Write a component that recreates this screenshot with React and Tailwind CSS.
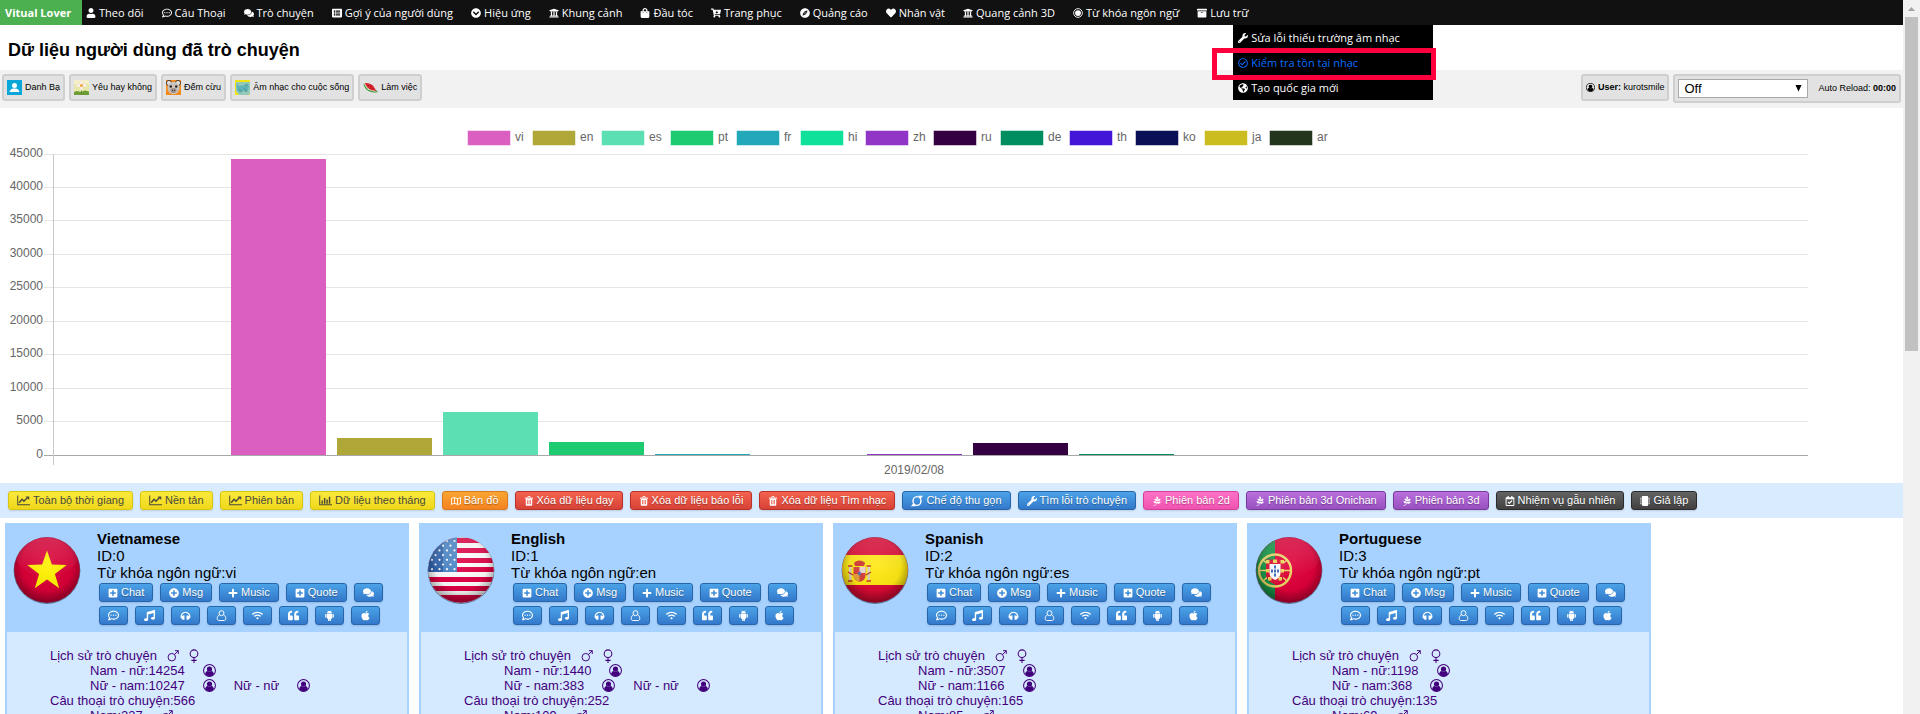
import React from "react";
import {
  FaUser, FaRegCommentDots, FaComments, FaListAlt, FaChevronCircleDown, FaUniversity, FaShoppingBag,
  FaCartArrowDown, FaCompass, FaHeart, FaArchive, FaWrench, FaRegCheckCircle, FaGlobeAmericas,
  FaRegMap, FaPagelines, FaRegCalendarCheck, FaMicrochip, FaPlusSquare,
  FaPlusCircle, FaPlus, FaMusic, FaWifi, FaQuoteLeft, FaApple,
} from "react-icons/fa";

/* ---------- hand-drawn icons ---------- */

const RingDot = (p) => (
  <svg viewBox="0 0 16 16" width="1em" height="1em" {...p}>
    <circle cx="8" cy="8" r="7" fill="none" stroke="currentColor" strokeWidth="1.4" />
    <circle cx="8" cy="8" r="4.6" fill="currentColor" />
  </svg>
);

const UserRing = (p) => (
  <svg viewBox="0 0 16 16" width="1em" height="1em" {...p}>
    <circle cx="8" cy="8" r="7.3" fill="none" stroke="currentColor" strokeWidth="1.3" />
    <circle cx="8" cy="6.2" r="3.2" fill="currentColor" />
    <path d="M2.6 12.2C3 9.8 4.3 8.7 5.6 8.6c1.4 1.2 3.4 1.2 4.8 0 1.3.1 2.6 1.2 3 3.6A7 7 0 0 1 8 15a7 7 0 0 1-5.4-2.8z" fill="currentColor" />
  </svg>
);

const LineChart = (p) => (
  <svg viewBox="0 0 18 14" width="13" height="11" {...p}>
    <path d="M1 0v13h17" fill="none" stroke="currentColor" strokeWidth="1.4" />
    <path d="M3 10l4-4.6 2.6 2.6L14.6 3" fill="none" stroke="currentColor" strokeWidth="2" />
    <path d="M11.8 1.4H17v5z" fill="currentColor" />
  </svg>
);

const BarChart = (p) => (
  <svg viewBox="0 0 18 14" width="13" height="11" {...p}>
    <path d="M1 0v13h17" fill="none" stroke="currentColor" strokeWidth="1.4" />
    <path d="M3.4 7h2v4.6h-2zM6.8 3.5h2v8.1h-2zM10.2 5.5h2v6.1h-2zM13.6 1.8h2v9.8h-2z" fill="currentColor" />
  </svg>
);

const Trash = (p) => (
  <svg viewBox="0 0 16 16" width="1em" height="1em" {...p}>
    <path d="M5.500 2.600L6.300.9h3.400l.8 1.700" fill="none" stroke="currentColor" strokeWidth="1.400" />
    <path d="M1.500 2.600h13v1.700h-13z" fill="currentColor" />
    <path fillRule="evenodd" d="M2.800 4.300h10.400V14c0 1-.6 1.600-1.400 1.600H4.200c-.8 0-1.400-.6-1.400-1.600zM5 6.500v6.800h1.100V6.500zM7.450 6.500v6.800h1.100V6.500zM9.900 6.500v6.800H11V6.500z" fill="currentColor" />
  </svg>
);

const Compact = (p) => (
  <svg viewBox="0 0 16 16" width="12" height="12" {...p}>
    <ellipse cx="8" cy="8" rx="5.300" ry="5.800" fill="none" stroke="currentColor" strokeWidth="1.900" />
    <path d="M9.500 1H16l-3 4zM6.500 15H0l3-4z" fill="currentColor" />
  </svg>
);

const Headset = (p) => (
  <svg viewBox="0 0 16 16" width="1em" height="1em" {...p}>
    <path d="M2 11.500A6.300 6.300 0 1 1 14 11.500" fill="none" stroke="currentColor" strokeWidth="1.800" />
    <path d="M4.700 8h1.800v6H4.700c-1.700 0-3-1.300-3-3s1.300-3 3-3zM11.300 8H9.500v6h1.800c1.700 0 3-1.300 3-3s-1.300-3-3-3z" fill="currentColor" />
  </svg>
);

const Person = (p) => (
  <svg viewBox="0 0 16 16" width="1em" height="1em" fill="none" stroke="currentColor" strokeWidth="1.400" {...p}>
    <circle cx="8" cy="4.600" r="3.600" />
    <path d="M5 7c-2 .7-3.200 3-3.200 5.500 0 1.800 1 2.800 2.400 2.800h7.600c1.400 0 2.400-1 2.400-2.800C14.200 10 13 7.700 11 7" />
  </svg>
);

const Robot = (p) => (
  <svg viewBox="0 0 16 16" width="1em" height="1em" fill="currentColor" {...p}>
    <path d="M4.200 5.200C4.300 3.600 5.200 2.600 6 2.100L5.200.6l.5-.3.8 1.500a4.600 4.600 0 0 1 3 0L10.300.3l.5.300L10 2.100c.8.500 1.700 1.500 1.800 3.100z" />
    <path d="M4.200 5.800h7.600v6c0 .6-.4 1-1 1H10v2.300a.9.9 0 0 1-1.800 0v-2.300h-.4v2.300a.9.9 0 0 1-1.800 0v-2.300h-.8c-.6 0-1-.4-1-1z" />
    <rect x="1.700" y="5.700" width="1.900" height="5.600" rx=".95" />
    <rect x="12.400" y="5.700" width="1.900" height="5.600" rx=".95" />
  </svg>
);

const Mars = (p) => (
  <svg viewBox="0 0 16 16" width="12" height="12" fill="none" stroke="currentColor" strokeWidth="1.300" {...p}>
    <circle cx="6.400" cy="9.600" r="5" />
    <path d="M10 6L15 1M10.600.9H15v4.400" />
  </svg>
);

const Venus = (p) => (
  <svg viewBox="3 0 10 16" width="10" height="14" fill="none" stroke="currentColor" strokeWidth="1.200" {...p}>
    <circle cx="8" cy="5.400" r="4.400" />
    <path d="M8 10v6M5 13h6" />
  </svg>
);

const Contact = () => (
  <svg viewBox="0 0 15 15" className="size-[15px]">
    <rect width="15" height="15" fill="#0aa7d8" />
    <circle cx="7.500" cy="5.600" r="2.500" fill="#fff" />
    <path d="M2.600 12c.4-2.400 2-3.300 3.600-3.500h2.600c1.600.2 3.200 1.100 3.600 3.500z" fill="#fff" />
  </svg>
);

const Flower = () => (
  <svg viewBox="0 0 15 15" className="size-[15px]">
    <rect width="15" height="15" fill="#e6e9a8" />
    <rect width="15" height="4" fill="#f3efcb" />
    <path d="M0 12l3-1 4 1 4-1.500 4 1V15H0z" fill="#6c9c33" />
    <path d="M7.500 8v6" stroke="#5d8a2c" />
    <g fill="#fdf3ee" stroke="#e9cdbb" strokeWidth=".3">
      <ellipse cx="7.500" cy="3" rx="1.500" ry="2.400" />
      <ellipse cx="7.500" cy="8" rx="1.500" ry="2.400" />
      <ellipse cx="4.700" cy="5.500" rx="2.400" ry="1.500" />
      <ellipse cx="10.300" cy="5.500" rx="2.400" ry="1.500" />
    </g>
    <circle cx="7.500" cy="5.400" r="1.500" fill="#f2a33a" />
  </svg>
);

const Sheep = () => (
  <svg viewBox="0 0 15 15" className="size-[15px]">
    <rect width="15" height="15" fill="#f58a1b" />
    <circle cx="3" cy="3" r="2.600" fill="#e9e4dc" stroke="#4b3d35" />
    <circle cx="12" cy="3" r="2.600" fill="#e9e4dc" stroke="#4b3d35" />
    <ellipse cx="7.500" cy="8" rx="6" ry="6.200" fill="#c9c2bd" />
    <ellipse cx="7.500" cy="10.500" rx="3" ry="2.400" fill="#9d908b" />
    <circle cx="4.800" cy="6.500" r="1.200" fill="#222" />
    <circle cx="10.200" cy="6.500" r="1.200" fill="#222" />
    <circle cx="6.500" cy="10.300" r=".6" fill="#3a2d2a" />
    <circle cx="8.500" cy="10.300" r=".6" fill="#3a2d2a" />
  </svg>
);

const Melody = () => (
  <svg viewBox="0 0 15 15" className="size-[15px]">
    <rect width="15" height="15" fill="#f2e512" />
    <path d="M1 2h14v12l-2 1H4L1 11z" fill="#93c9b6" />
    <path d="M1 3l3 3 6-1 3-2 1 4-2 5-4-1-3 2-3-3z" fill="#62b3b8" />
    <path d="M4 9l3 3M9 8l3 4M10 4l2 2" stroke="#4c8f8c" strokeWidth=".9" />
  </svg>
);

const Melon = () => (
  <svg viewBox="0 0 15 15" className="size-[15px]">
    <path d="M.5 3.500C1.200 9.500 7 13.500 14 12.200c.7-.2.700-.9.300-1.300z" fill="#3f9a3c" />
    <path d="M1.300 3.300C2.500 8.800 8 12.200 13.600 11.300z" fill="#f4f1d6" />
    <path d="M2 3C3.200 7.900 8 11.300 13.300 10.700L10 5.500C7.500 3.300 4.500 2.600 2 3z" fill="#d8252f" />
    <path d="M5 5.200l.5.700M7.500 6l.4.700M6.500 8l.5.500M9.500 8.500l.5.500" stroke="#3a0d12" strokeWidth=".7" />
  </svg>
);

/* ---------- flags ---------- */

function Flag({ id, children }) {
  return (
    <svg viewBox="0 0 68 68" className="size-[68px] shrink-0" role="img" aria-label={id}>
      <defs>
        <clipPath id={`clip-${id}`}><circle cx="34" cy="34" r="32.800" /></clipPath>
        <radialGradient id={`shade-${id}`} cx=".5" cy=".42" r=".6">
          <stop offset="0" stopColor="#fff" stopOpacity=".05" />
          <stop offset=".65" stopColor="#000" stopOpacity=".05" />
          <stop offset="1" stopColor="#000" stopOpacity=".45" />
        </radialGradient>
        <linearGradient id={`gloss-${id}`} x1="0" y1="0" x2="0" y2="1">
          <stop offset="0" stopColor="#fff" stopOpacity=".18" />
          <stop offset="1" stopColor="#fff" stopOpacity="0" />
        </linearGradient>
      </defs>
      <circle cx="34" cy="34.500" r="33.400" fill="#24364f" opacity=".6" />
      <g clipPath={`url(#clip-${id})`}>
        {children}
        <ellipse cx="34" cy="20" rx="31" ry="20" fill={`url(#gloss-${id})`} />
        <circle cx="34" cy="34" r="33" fill={`url(#shade-${id})`} />
      </g>
    </svg>
  );
}

const FlagVi = () => (
  <Flag id="Vietnamese">
    <rect width="68" height="68" fill="#db0038" />
    <path d="M34 14.500l4.900 14.100 14.900.3-11.900 9 4.300 14.300L34 43.600l-12.200 8.600 4.300-14.300-11.900-9 14.900-.3z" fill="#fff200" />
  </Flag>
);

const FlagEn = () => (
  <Flag id="English">
    <rect width="68" height="68" fill="#fff" />
    {[2, 12, 22, 31, 41, 50, 59].map((y, i) => <rect key={y} y={y} width="68" height={i === 6 ? 9 : 5} fill="#e00044" />)}
    <rect width="30" height="36" fill="#4a86c8" />
    <rect width="16" height="36" fill="#1f4f9b" opacity=".6" />
    {[0, 1, 2, 3, 4, 5, 6].map((r) =>
      [0, 1, 2, 3].map((c) => <circle key={`${r}-${c}`} cx={(r % 2 ? 1 : 5) + c * 7.500} cy={5 + r * 4.700} r="1.100" fill="#fff" />)
    )}
  </Flag>
);

const FlagEs = () => (
  <Flag id="Spanish">
    <rect width="68" height="68" fill="#dc0a35" />
    <rect y="19" width="68" height="30" fill="#ffe914" />
    <path d="M13 27c2-3.500 9-3.500 11 0l-1 3h-9z" fill="#d2342f" />
    <path d="M12.500 31h12v8c0 4-2.500 6-6 7-3.500-1-6-3-6-7z" fill="#d6423c" />
    <path d="M18.500 31h6v6h-6z" fill="#e9d6d0" />
    <path d="M12.500 38h6v8c-3.500-1-6-3-6-8z" fill="#e5a23a" />
    <ellipse cx="18.500" cy="37.500" rx="1.600" ry="2" fill="#5b6fb5" />
    <path d="M8 31h2.500v13H8zM26.500 31H29v13h-2.500z" fill="#d9d0c0" />
    <path d="M7 30h4.500M25.500 30H30M7 45h4.500M25.500 45H30M7 36l5 3M30 36l-5 3" stroke="#c0392b" strokeWidth="1.400" />
  </Flag>
);

const FlagPt = () => (
  <Flag id="Portuguese">
    <rect width="68" height="68" fill="#e0003a" />
    <rect width="20" height="68" fill="#17964a" />
    <g fill="none" stroke="#ecd566">
      <circle cx="20" cy="34.500" r="16" strokeWidth="2.400" />
      <path d="M8 24l24 21M8 45l24-21M5 34.500h30" strokeWidth="1.600" />
    </g>
    <path d="M11 23.500h18v14c0 6-4 9-9 11-5-2-9-5-9-11z" fill="#dc1238" />
    <path d="M11 24h3.500v3.500H11zM18 23.500h4V27h-4zM25.500 24H29v3.500h-3.500zM11 33h3.500v3.500H11zM25.500 33H29v3.500h-3.500zM13 41h3.500v3.500H13zM23.500 41H27v3.500h-3.500z" fill="#f0d95a" />
    <path d="M14.500 28h11v8.500c0 4-2 6-5.500 7.500-3.500-1.500-5.500-3.500-5.500-7.500z" fill="#fff" />
    <path d="M19 29.500h2v3h-2zM16 33.500h2v3h-2zM19 33.500h2v3h-2zM22 33.500h2v3h-2zM19 37.500h2v3h-2z" fill="#3d6ec0" />
  </Flag>
);

/* ---------- data ---------- */

const nav = [
  [FaUser, "Theo dõi"], [FaRegCommentDots, "Câu Thoại"], [FaComments, "Trò chuyện"],
  [FaListAlt, "Gợi ý của người dùng"], [FaChevronCircleDown, "Hiệu ứng"], [FaUniversity, "Khung cảnh"],
  [FaShoppingBag, "Đầu tóc"], [FaCartArrowDown, "Trang phục"], [FaCompass, "Quảng cáo"],
  [FaHeart, "Nhân vật"], [FaUniversity, "Quang cảnh 3D"], [RingDot, "Từ khóa ngôn ngữ"], [FaArchive, "Lưu trữ"],
];

const menu = [
  [FaWrench, "Sửa lỗi thiếu trường âm nhạc", "text-white"],
  [FaRegCheckCircle, "Kiểm tra tồn tại nhạc", "text-[#0a6dff]"],
  [FaGlobeAmericas, "Tạo quốc gia mới", "text-white"],
];

const apps = [
  [Contact, "Danh Bạ"], [Flower, "Yêu hay không"], [Sheep, "Đếm cừu"], [Melody, "Âm nhạc cho cuộc sống"], [Melon, "Làm việc"],
];

const series = [
  ["vi", "#da5fc1", 44300, 467], ["en", "#afa839", 2550, 532], ["es", "#5ce0b3", 6450, 601], ["pt", "#1ecb71", 1950, 670],
  ["fr", "#22a8b8", 150, 736], ["hi", "#0fe09a", 0, 800], ["zh", "#9035c5", 150, 865], ["ru", "#350042", 1800, 933],
  ["de", "#008e60", 150, 1000], ["th", "#4316d8", 0, 1069], ["ko", "#0b0f55", 0, 1135], ["ja", "#cbbc1f", 0, 1204], ["ar", "#24351d", 0, 1269],
];

const tones = {
  yellow: "border-[#d9c60f] from-[#fbea3c] to-[#efd717] text-[#4a4a3a]",
  orange: "border-[#d8791c] from-[#f9a532] to-[#f4831f] text-white [text-shadow:0_1px_1px_#0005]",
  red: "border-[#b8322a] from-[#f5624f] to-[#d64236] text-white [text-shadow:0_1px_1px_#0005]",
  blue: "border-[#2766ab] from-[#4ba3e7] to-[#3478cb] text-white [text-shadow:0_1px_1px_#0005]",
  pink: "border-[#d53f9c] from-[#fd72c6] to-[#f052b0] text-white [text-shadow:0_1px_1px_#0005]",
  purple: "border-[#783b9c] from-[#ba70dd] to-[#9850c0] text-white [text-shadow:0_1px_1px_#0005]",
  dark: "border-[#2b2b2b] from-[#636363] to-[#414141] text-white [text-shadow:0_1px_1px_#0005]",
};

const actions = [
  [LineChart, "Toàn bộ thời giang", "yellow"], [LineChart, "Nền tản", "yellow"], [LineChart, "Phiên bản", "yellow"],
  [BarChart, "Dữ liệu theo tháng", "yellow"], [FaRegMap, "Bản đồ", "orange"], [Trash, "Xóa dữ liệu dạy", "red"],
  [Trash, "Xóa dữ liệu báo lỗi", "red"], [Trash, "Xóa dữ liệu Tìm nhạc", "red"], [Compact, "Chế độ thu gọn", "blue"],
  [FaWrench, "Tìm lỗi trò chuyện", "blue"], [FaPagelines, "Phiên bản 2d", "pink"], [FaPagelines, "Phiên bản 3d Onichan", "purple"],
  [FaPagelines, "Phiên bản 3d", "purple"], [FaRegCalendarCheck, "Nhiệm vụ gẫu nhiên", "dark"], [FaMicrochip, "Giả lập", "dark"],
];

const countries = [
  { Pic: FlagVi, name: "Vietnamese", key: "vi", mf: 14254, fm: 10247, ff: true, talk: 566, male: 237 },
  { Pic: FlagEn, name: "English", key: "en", mf: 1440, fm: 383, ff: true, talk: 252, male: 109 },
  { Pic: FlagEs, name: "Spanish", key: "es", mf: 3507, fm: 1166, ff: false, talk: 165, male: 85 },
  { Pic: FlagPt, name: "Portuguese", key: "pt", mf: 1198, fm: 368, ff: false, talk: 135, male: 69 },
];

const rowOne = [[FaPlusSquare, "Chat"], [FaPlusCircle, "Msg"], [FaPlus, "Music"], [FaPlusSquare, "Quote"], [FaComments, ""]];
const rowTwo = [
  [FaRegCommentDots, "Comments"], [FaMusic, "Songs"], [Headset, "Audio"], [Person, "Users"],
  [FaWifi, "Radio"], [FaQuoteLeft, "Quotes"], [Robot, "Android"], [FaApple, "Apple"],
];

/* ---------- parts ---------- */

function Pill({ Icon, label, tone, name }) {
  return (
    <button
      type="button"
      aria-label={name || label}
      className={`flex h-[19px] items-center gap-[3px] rounded-[3px] border bg-linear-to-b px-2 text-[11px] leading-none whitespace-nowrap shadow-[0_1px_2px_#0002] ${tones[tone]}`}
    >
      <Icon className={`shrink-0 ${label ? "text-[10px]" : "text-[11px]"}`} />
      {label}
    </button>
  );
}

function NavBar() {
  return (
    <nav className="flex h-[25px] bg-[#111] font-['Open_Sans','Noto_Sans',sans-serif] text-[11px] text-white">
      <a href="#home" className="flex w-[82px] items-center bg-[#4caf50] pt-px pl-[5px] font-bold">Vitual Lover</a>
      <ul className="flex gap-[18px] pl-1">
        {nav.map(([Icon, label], i) => (
          <li key={label} className="relative flex">
            <a href={`#nav-${i}`} className="flex items-center gap-[3px] pt-px whitespace-nowrap"><Icon className="text-[10px]" />{label}</a>
            {i === nav.length - 1 && (
              <div className="absolute top-full left-9 z-10 w-[200px] bg-black">
                {menu.map(([MIcon, text, tone]) => (
                  <a key={text} href="#menu" className={`flex h-[25px] items-center gap-[3px] pt-px pl-[5px] whitespace-nowrap ${tone}`}><MIcon className="text-[10px]" />{text}</a>
                ))}
                <div className="pointer-events-none absolute top-[23px] -left-[21px] h-8 w-[224px] border-[5px] border-[#ff003c]" />
              </div>
            )}
          </li>
        ))}
      </ul>
    </nav>
  );
}

function ToolBar() {
  const box = "flex items-center rounded-[3px] border-2 border-[#cfcfcf] bg-[#e2e2e2]";
  return (
    <div className="flex h-[38px] items-start justify-between bg-[#f2f2f2] px-[2px] pt-1 text-[9px] text-black">
      <div className="flex gap-1">
        {apps.map(([Icon, label]) => (
          <a key={label} href="#app" className={`${box} h-[27px] gap-[3px] px-[3px] whitespace-nowrap`}><Icon />{label}</a>
        ))}
      </div>
      <div className="flex items-start gap-1">
        <a href="#user" className={`${box} h-[27px] gap-[3px] px-[3px] whitespace-nowrap`}>
          <UserRing className="text-[9px]" /><span><b>User:</b> kurotsmile</span>
        </a>
        <div className={`${box} h-[29px] gap-[10px] px-[3px]`}>
          <div className="relative">
            <select aria-label="Auto reload interval" className="h-[19px] w-[130px] appearance-none border border-[#a9a9a9] bg-white pl-[5px] text-[13px] leading-none">
              <option>Off</option>
              <option>On</option>
            </select>
            <svg viewBox="0 0 8 8" className="pointer-events-none absolute top-[6px] right-[6px] size-[7px]"><path d="M.5 0h7L4 7.500z" /></svg>
          </div>
          <span className="whitespace-nowrap">Auto Reload: <b>00:00</b></span>
        </div>
      </div>
    </div>
  );
}

function Chart() {
  const zero = 347.5;
  const y = (v) => zero - (v / 45000) * 301;
  return (
    <svg viewBox="0 0 1903 375" className="block h-auto w-full" fontSize="12" fill="#666" role="img" aria-label="2019/02/08">
      {series.map(([key, color, , x]) => (
        <g key={key}>
          <rect x={x + 0.5} y="22.500" width="43" height="15" fill={color} stroke="#fff" strokeOpacity=".5" />
          <text x={x + 48} y="33">{key}</text>
        </g>
      ))}
      {[0, 5000, 10000, 15000, 20000, 25000, 30000, 35000, 40000, 45000].map((v) => (
        <g key={v}>
          <path d={`M44 ${Math.round(y(v)) - 0.5}H1808`} stroke={v ? "#e5e5e5" : "#a8a8a8"} />
          <text x="43" y={Math.round(y(v)) + 2} textAnchor="end">{v}</text>
        </g>
      ))}
      <path d="M53.500 46V357" stroke="#c9c9c9" />
      {series.map(([key, color, v], i) => v > 0 && (
        <rect key={key} x={231 + i * 106} y={Math.round(y(v))} width="95" height={347 - Math.round(y(v))} fill={color} />
      ))}
      <text x="914" y="366" textAnchor="middle">2019/02/08</text>
    </svg>
  );
}

function Country({ id, data }) {
  const { Pic } = data;
  const row = "flex items-center h-[15px]";
  return (
    <section className="w-[404px] border-2 border-t-0 border-[#a7d2ff] bg-[#d6eaff]">
      <header className="flex h-[109px] gap-4 bg-[#a7d2ff] pl-[6px]">
        <div className="pt-[13px]"><Pic /></div>
        <div className="pt-[7px] text-[15px] leading-[17px] text-black">
          <h2 className="font-bold">{data.name}</h2>
          <p>ID:{id}</p>
          <p>Từ khóa ngôn ngữ:{data.key}</p>
          <div className="mt-[2px] flex gap-[7px] pl-[2px]">
            {rowOne.map(([Icon, label]) => <Pill key={label} Icon={Icon} label={label} name={label || "Messages"} tone="blue" />)}
          </div>
          <div className="mt-1 flex gap-[7px] pl-[2px]">
            {rowTwo.map(([Icon, name]) => <Pill key={name} Icon={Icon} name={name} tone="blue" />)}
          </div>
        </div>
      </header>
      <ul className="h-64 pt-4 pl-[43px] text-[13px] leading-[15px] text-[#42007c]">
        <li>
          <div className={row}>Lịch sử trò chuyện<Mars className="ml-[10px]" /><Venus className="ml-[10px]" /></div>
          <ul className="pl-10">
            <li className={row}>Nam - nữ:{data.mf}<UserRing className="ml-[18px] text-[13px]" /></li>
            <li className={row}>
              Nữ - nam:{data.fm}<UserRing className="ml-[18px] text-[13px]" />
              {data.ff && <span className="ml-[18px] flex items-center">Nữ - nữ<UserRing className="ml-[18px] text-[13px]" /></span>}
            </li>
          </ul>
        </li>
        <li>
          <div className={row}>Câu thoại trò chuyện:{data.talk}</div>
          <ul className="pl-10">
            <li className={row}>Nam:{data.male}<Mars className="ml-[18px]" /></li>
          </ul>
        </li>
      </ul>
    </section>
  );
}

export default function App() {
  return (
    <div className="flex h-screen overflow-hidden bg-white font-['Liberation_Sans',Arial,sans-serif]">
      <main className="min-w-0 flex-1">
        <NavBar />
        <h1 className="flex h-[45px] items-center pt-[6px] pl-2 text-[18px] font-bold text-black">Dữ liệu người dùng đã trò chuyện</h1>
        <ToolBar />
        <Chart />
        <div className="flex h-[35px] gap-[7px] bg-[#d9ecff] pt-2 pl-2">
          {actions.map(([Icon, label, tone]) => <Pill key={label} Icon={Icon} label={label} tone={tone} />)}
        </div>
        <div className="flex flex-wrap gap-[10px] pt-[5px] pl-[5px]">
          {countries.map((c, i) => <Country key={c.key} id={i} data={c} />)}
        </div>
      </main>
      <div className="flex w-[17px] flex-col items-center bg-[#f1f1f1]">
        <svg viewBox="0 0 17 17" className="size-[17px]"><path d="M5 11l3.500-4 3.500 4z" fill="#a3a3a3" /></svg>
        <div className="h-[334px] w-[13px] bg-[#c1c1c1]" />
      </div>
    </div>
  );
}
